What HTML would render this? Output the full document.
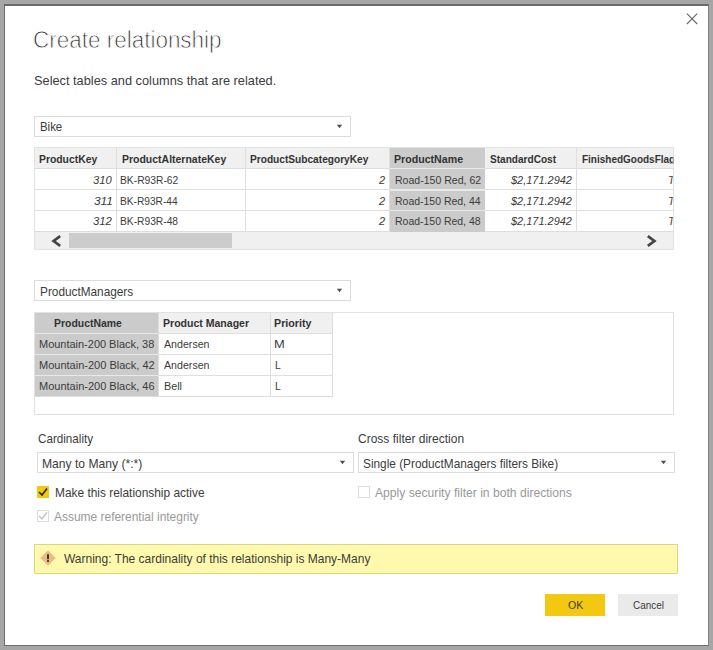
<!DOCTYPE html>
<html lang="en"><head><meta charset="utf-8"><title>Create relationship</title>
<style>
html,body{margin:0;padding:0}
body{width:713px;height:650px;overflow:hidden;background:#a6a6a6;font-family:"Liberation Sans",sans-serif;color:#333;position:relative}
.dlg{position:absolute;left:4px;top:4px;width:703px;height:639px;background:#fff;border-style:solid;border-color:#6b6b6b #808080 #6e6e6e #6e6e6e;border-width:2px 1px 1px 1px;box-sizing:content-box}
.abs,.dlg *{position:absolute;box-sizing:border-box}
.tx{white-space:nowrap;transform-origin:0 0;margin:0;padding:0;font-weight:400}
.sel{border:1px solid #dcdcdc;background:#fff}
.sel svg{top:7.2px;right:6.9px}
.grid{border:1px solid #e2e2e2;background:#fff;overflow:hidden}
.hd{background:#f0f0f0}
.hl{background:#dedede}
.sc{background:#cbcbcb}
.sl{background:#e9e9e9}
.cb{width:12px;height:12px;border:1px solid #c8c8c8;background:#fff}
.btn{height:22px;width:60px}
</style></head>
<body>
<div class="dlg">
<svg class="abs" style="left:681px;top:7px" width="12" height="12" viewBox="0 0 12 12"><path d="M0.9 0.7 L11.2 11 M11.2 0.7 L0.9 11" stroke="#666" stroke-width="1.1" fill="none"/></svg>
<div class="sel" style="left:29px;top:109.9px;width:317px;height:21.6px;"><svg width="7" height="5" viewBox="0 0 7 5"><polygon points="0.8,0.8 6.2,0.8 3.5,4.2" fill="#505050"/></svg></div>
<div class="sel" style="left:29px;top:273.9px;width:317px;height:21.6px;"><svg width="7" height="5" viewBox="0 0 7 5"><polygon points="0.8,0.8 6.2,0.8 3.5,4.2" fill="#505050"/></svg></div>
<div class="grid" style="left:29px;top:141px;width:640px;height:102.8px;"><div class="hd" style="left:0px;top:0px;width:640px;height:20px;"></div><div class="hl" style="left:0px;top:20.1px;width:640px;height:1px;"></div><div class="hl" style="left:0px;top:41.3px;width:640px;height:1px;"></div><div class="hl" style="left:0px;top:62.1px;width:640px;height:1px;"></div><div class="hl" style="left:0px;top:82.8px;width:640px;height:1px;"></div><div class="hl" style="left:80.9px;top:0px;width:1px;height:83.5px;"></div><div class="hl" style="left:210.2px;top:0px;width:1px;height:83.5px;"></div><div class="hl" style="left:353.8px;top:0px;width:1px;height:83.5px;"></div><div class="hl" style="left:540.9px;top:0px;width:1px;height:83.5px;"></div><div class="sc" style="left:354.7px;top:0px;width:95.2px;height:83.6px;"></div><div class="sl" style="left:354.7px;top:19.8px;width:95.2px;height:1.7px;"></div><div class="sl" style="left:354.7px;top:41px;width:95.2px;height:1.7px;"></div><div class="sl" style="left:354.7px;top:61.8px;width:95.2px;height:1.7px;"></div><div class="hd" style="left:0px;top:83.8px;width:640px;height:18px;"></div><div class="" style="left:33.8px;top:85.3px;width:163.2px;height:14.4px;background:#cccccc"></div><svg class="abs" style="left:16px;top:87px" width="11" height="12" viewBox="0 0 11 12"><path d="M9.2 1.2 L2.6 6 L9.2 10.8" stroke="#444" stroke-width="2.7" fill="none"/></svg><svg class="abs" style="left:611px;top:87px" width="11" height="12" viewBox="0 0 11 12"><path d="M1.8 1.2 L8.4 6 L1.8 10.8" stroke="#444" stroke-width="2.7" fill="none"/></svg></div>
<div class="grid" style="left:29px;top:306px;width:640px;height:102.8px;"><div class="hd" style="left:0px;top:0px;width:298px;height:20px;"></div><div class="hl" style="left:0px;top:19.8px;width:298px;height:1px;"></div><div class="hl" style="left:0px;top:40.9px;width:298px;height:1px;"></div><div class="hl" style="left:0px;top:61.8px;width:298px;height:1px;"></div><div class="hl" style="left:0px;top:82.7px;width:298px;height:1px;"></div><div class="hl" style="left:123.2px;top:0px;width:1px;height:83.7px;"></div><div class="hl" style="left:235.3px;top:0px;width:1px;height:83.7px;"></div><div class="hl" style="left:297.2px;top:0px;width:1px;height:83.7px;"></div><div class="sc" style="left:0px;top:0px;width:123.3px;height:83.3px;"></div><div class="sl" style="left:0px;top:19.5px;width:123.3px;height:1.7px;"></div><div class="sl" style="left:0px;top:40.6px;width:123.3px;height:1.7px;"></div><div class="sl" style="left:0px;top:61.5px;width:123.3px;height:1.7px;"></div></div>
<div class="sel" style="left:32px;top:445.8px;width:317px;height:21.5px;"><svg width="7" height="5" viewBox="0 0 7 5"><polygon points="0.8,0.8 6.2,0.8 3.5,4.2" fill="#505050"/></svg></div>
<div class="sel" style="left:353px;top:445.8px;width:317px;height:21.5px;"><svg width="7" height="5" viewBox="0 0 7 5"><polygon points="0.8,0.8 6.2,0.8 3.5,4.2" fill="#505050"/></svg></div>
<div class="cb" style="left:32px;top:480.4px;width:12px;height:12.1px;background:#f2c811;border:0"><svg class="abs" style="left:0;top:0" width="12" height="12" viewBox="0 0 12 12"><path d="M2.1 6 L5 9 L10 2.5" stroke="#2a2a2a" stroke-width="1.7" fill="none"/></svg></div>
<div class="cb" style="left:32px;top:504.4px;width:12px;height:12px;border-color:#dcdcdc"><svg class="abs" style="left:-1px;top:-1px" width="12" height="12" viewBox="0 0 12 12"><path d="M2.1 6 L5 9 L10 2.5" stroke="#c0c0c0" stroke-width="1.3" fill="none"/></svg></div>
<div class="cb" style="left:353.2px;top:480.4px;width:12px;height:12px;border-color:#dcdcdc"></div>
<div class="" style="left:29px;top:538.2px;width:644px;height:29.7px;background:#fff9ae;border:1px solid #dcd682"></div>
<svg class="abs" style="left:34.8px;top:544.2px" width="16" height="16" viewBox="0 0 16 16"><path d="M8 0.3 L15.7 8 L8 15.7 L0.3 8 Z" fill="#e9be82"/><rect x="7" y="4.2" width="2" height="5.1" fill="#3a3a3a"/><rect x="7" y="10.1" width="2" height="1.8" fill="#3a3a3a"/></svg>
<div class="btn" style="left:540px;top:588px;width:60px;height:22px;background:#f2c811"></div>
<div class="btn" style="left:613px;top:588px;width:60px;height:22px;background:#eaeaea"></div>
<h1 class="tx" id="t0" style="left:28.40px;top:22.50px;font-size:23.5px;line-height:23.5px;color:#2c2c2c;transform:scaleX(0.9561);-webkit-text-stroke:0.8px #fff;">Create relationship</h1>
<span class="tx" id="t1" style="left:29.35px;top:68.82px;font-size:12.7px;line-height:12.7px;color:#3c3c3c;transform:scaleX(1.0072);">Select tables and columns that are related.</span>
<span class="tx" id="t2" style="left:35.17px;top:115.31px;font-size:12.7px;line-height:12.7px;color:#3c3c3c;transform:scaleX(0.9001);">Bike</span>
<span class="tx" id="t3" style="left:35.04px;top:279.61px;font-size:12.7px;line-height:12.7px;color:#3c3c3c;transform:scaleX(0.9307);">ProductManagers</span>
<span class="tx" id="t4" style="left:33.95px;top:146.61px;font-size:11.7px;line-height:11.7px;color:#333;transform:scaleX(0.8866);font-weight:700;">ProductKey</span>
<span class="tx" id="t5" style="left:116.83px;top:146.61px;font-size:11.7px;line-height:11.7px;color:#333;transform:scaleX(0.8964);font-weight:700;">ProductAlternateKey</span>
<span class="tx" id="t6" style="left:245.29px;top:146.61px;font-size:11.7px;line-height:11.7px;color:#333;transform:scaleX(0.8679);font-weight:700;">ProductSubcategoryKey</span>
<span class="tx" id="t7" style="left:389.35px;top:146.61px;font-size:11.7px;line-height:11.7px;color:#333;transform:scaleX(0.9086);font-weight:700;">ProductName</span>
<span class="tx" id="t8" style="left:484.50px;top:146.61px;font-size:11.7px;line-height:11.7px;color:#333;transform:scaleX(0.8618);font-weight:700;">StandardCost</span>
<span class="tx" id="t9" style="left:576.78px;top:146.61px;font-size:11.7px;line-height:11.7px;color:#333;transform:scaleX(0.8539);font-weight:700;width:107.30px;overflow:hidden;">FinishedGoodsFlag</span>
<span class="tx" id="t10" style="left:88.35px;top:167.81px;font-size:11.7px;line-height:11.7px;color:#3c3c3c;transform:scaleX(0.9638);font-style:italic;">310</span>
<span class="tx" id="t11" style="left:115.43px;top:167.81px;font-size:11.7px;line-height:11.7px;color:#3c3c3c;transform:scaleX(0.8800);">BK-R93R-62</span>
<span class="tx" id="t12" style="left:374.18px;top:167.81px;font-size:11.7px;line-height:11.7px;color:#3c3c3c;transform:scaleX(0.9408);font-style:italic;">2</span>
<span class="tx" id="t13" style="left:389.86px;top:167.81px;font-size:11.7px;line-height:11.7px;color:#3c3c3c;transform:scaleX(0.9023);">Road-150 Red, 62</span>
<span class="tx" id="t14" style="left:505.97px;top:167.81px;font-size:11.7px;line-height:11.7px;color:#3c3c3c;transform:scaleX(0.9375);font-style:italic;">$2,171.2942</span>
<span class="tx" id="t15" style="left:663.23px;top:167.81px;font-size:11.7px;line-height:11.7px;color:#3c3c3c;transform:scaleX(0.9535);font-style:italic;width:5.43px;overflow:hidden;">TRUE</span>
<span class="tx" id="t16" style="left:89.38px;top:188.50px;font-size:11.7px;line-height:11.7px;color:#3c3c3c;transform:scaleX(1.0134);font-style:italic;">311</span>
<span class="tx" id="t17" style="left:115.43px;top:188.50px;font-size:11.7px;line-height:11.7px;color:#3c3c3c;transform:scaleX(0.8694);">BK-R93R-44</span>
<span class="tx" id="t18" style="left:374.18px;top:188.50px;font-size:11.7px;line-height:11.7px;color:#3c3c3c;transform:scaleX(0.9408);font-style:italic;">2</span>
<span class="tx" id="t19" style="left:389.91px;top:188.50px;font-size:11.7px;line-height:11.7px;color:#3c3c3c;transform:scaleX(0.8957);">Road-150 Red, 44</span>
<span class="tx" id="t20" style="left:505.97px;top:188.50px;font-size:11.7px;line-height:11.7px;color:#3c3c3c;transform:scaleX(0.9375);font-style:italic;">$2,171.2942</span>
<span class="tx" id="t21" style="left:663.23px;top:188.50px;font-size:11.7px;line-height:11.7px;color:#3c3c3c;transform:scaleX(0.9535);font-style:italic;width:5.43px;overflow:hidden;">TRUE</span>
<span class="tx" id="t22" style="left:88.47px;top:209.40px;font-size:11.7px;line-height:11.7px;color:#3c3c3c;transform:scaleX(0.9692);font-style:italic;">312</span>
<span class="tx" id="t23" style="left:115.44px;top:209.40px;font-size:11.7px;line-height:11.7px;color:#3c3c3c;transform:scaleX(0.8757);">BK-R93R-48</span>
<span class="tx" id="t24" style="left:374.18px;top:209.40px;font-size:11.7px;line-height:11.7px;color:#3c3c3c;transform:scaleX(0.9408);font-style:italic;">2</span>
<span class="tx" id="t25" style="left:389.89px;top:209.40px;font-size:11.7px;line-height:11.7px;color:#3c3c3c;transform:scaleX(0.8955);">Road-150 Red, 48</span>
<span class="tx" id="t26" style="left:505.97px;top:209.40px;font-size:11.7px;line-height:11.7px;color:#3c3c3c;transform:scaleX(0.9375);font-style:italic;">$2,171.2942</span>
<span class="tx" id="t27" style="left:663.23px;top:209.40px;font-size:11.7px;line-height:11.7px;color:#3c3c3c;transform:scaleX(0.9535);font-style:italic;width:5.43px;overflow:hidden;">TRUE</span>
<span class="tx" id="t28" style="left:49.45px;top:310.81px;font-size:11.7px;line-height:11.7px;color:#333;transform:scaleX(0.8929);font-weight:700;">ProductName</span>
<span class="tx" id="t29" style="left:158.26px;top:310.81px;font-size:11.7px;line-height:11.7px;color:#333;transform:scaleX(0.9014);font-weight:700;">Product Manager</span>
<span class="tx" id="t30" style="left:269.39px;top:310.81px;font-size:11.7px;line-height:11.7px;color:#333;transform:scaleX(0.9159);font-weight:700;">Priority</span>
<span class="tx" id="t31" style="left:34.06px;top:331.50px;font-size:11.7px;line-height:11.7px;color:#3c3c3c;transform:scaleX(0.9385);">Mountain-200 Black, 38</span>
<span class="tx" id="t32" style="left:159.19px;top:331.71px;font-size:11.7px;line-height:11.7px;color:#3c3c3c;transform:scaleX(0.9102);">Andersen</span>
<span class="tx" id="t33" style="left:269.43px;top:331.71px;font-size:11.7px;line-height:11.7px;color:#3c3c3c;transform:scaleX(1.1049);">M</span>
<span class="tx" id="t34" style="left:34.06px;top:352.71px;font-size:11.7px;line-height:11.7px;color:#3c3c3c;transform:scaleX(0.9426);">Mountain-200 Black, 42</span>
<span class="tx" id="t35" style="left:159.19px;top:352.90px;font-size:11.7px;line-height:11.7px;color:#3c3c3c;transform:scaleX(0.9102);">Andersen</span>
<span class="tx" id="t36" style="left:269.68px;top:352.90px;font-size:11.7px;line-height:11.7px;color:#3c3c3c;transform:scaleX(0.8877);">L</span>
<span class="tx" id="t37" style="left:34.06px;top:373.90px;font-size:11.7px;line-height:11.7px;color:#3c3c3c;transform:scaleX(0.9410);">Mountain-200 Black, 46</span>
<span class="tx" id="t38" style="left:158.75px;top:374.11px;font-size:11.7px;line-height:11.7px;color:#3c3c3c;transform:scaleX(0.9238);">Bell</span>
<span class="tx" id="t39" style="left:269.68px;top:374.11px;font-size:11.7px;line-height:11.7px;color:#3c3c3c;transform:scaleX(0.8877);">L</span>
<span class="tx" id="t40" style="left:32.97px;top:426.71px;font-size:12.7px;line-height:12.7px;color:#3c3c3c;transform:scaleX(0.9184);">Cardinality</span>
<span class="tx" id="t41" style="left:353.25px;top:426.71px;font-size:12.7px;line-height:12.7px;color:#3c3c3c;transform:scaleX(0.9467);">Cross filter direction</span>
<span class="tx" id="t42" style="left:37.45px;top:451.91px;font-size:12.7px;line-height:12.7px;color:#3c3c3c;transform:scaleX(0.9541);">Many to Many (*:*)</span>
<span class="tx" id="t43" style="left:358.05px;top:451.91px;font-size:12.7px;line-height:12.7px;color:#3c3c3c;transform:scaleX(0.9317);">Single (ProductManagers filters Bike)</span>
<span class="tx" id="t44" style="left:50.16px;top:481.10px;font-size:12.7px;line-height:12.7px;color:#3c3c3c;transform:scaleX(0.9382);">Make this relationship active</span>
<span class="tx" id="t45" style="left:370.42px;top:481.10px;font-size:12.7px;line-height:12.7px;color:#999;transform:scaleX(0.9561);">Apply security filter in both directions</span>
<span class="tx" id="t46" style="left:48.95px;top:504.91px;font-size:12.7px;line-height:12.7px;color:#999;transform:scaleX(0.9421);">Assume referential integrity</span>
<span class="tx" id="t47" style="left:58.56px;top:547.01px;font-size:12.7px;line-height:12.7px;color:#3c3c3c;transform:scaleX(0.9446);">Warning: The cardinality of this relationship is Many-Many</span>
<span class="tx" id="t48" style="left:562.58px;top:593.21px;font-size:11.7px;line-height:11.7px;color:#3c3c3c;transform:scaleX(0.8989);">OK</span>
<span class="tx" id="t49" style="left:628.16px;top:593.21px;font-size:11.7px;line-height:11.7px;color:#3c3c3c;transform:scaleX(0.8480);">Cancel</span>
</div>
</body></html>
